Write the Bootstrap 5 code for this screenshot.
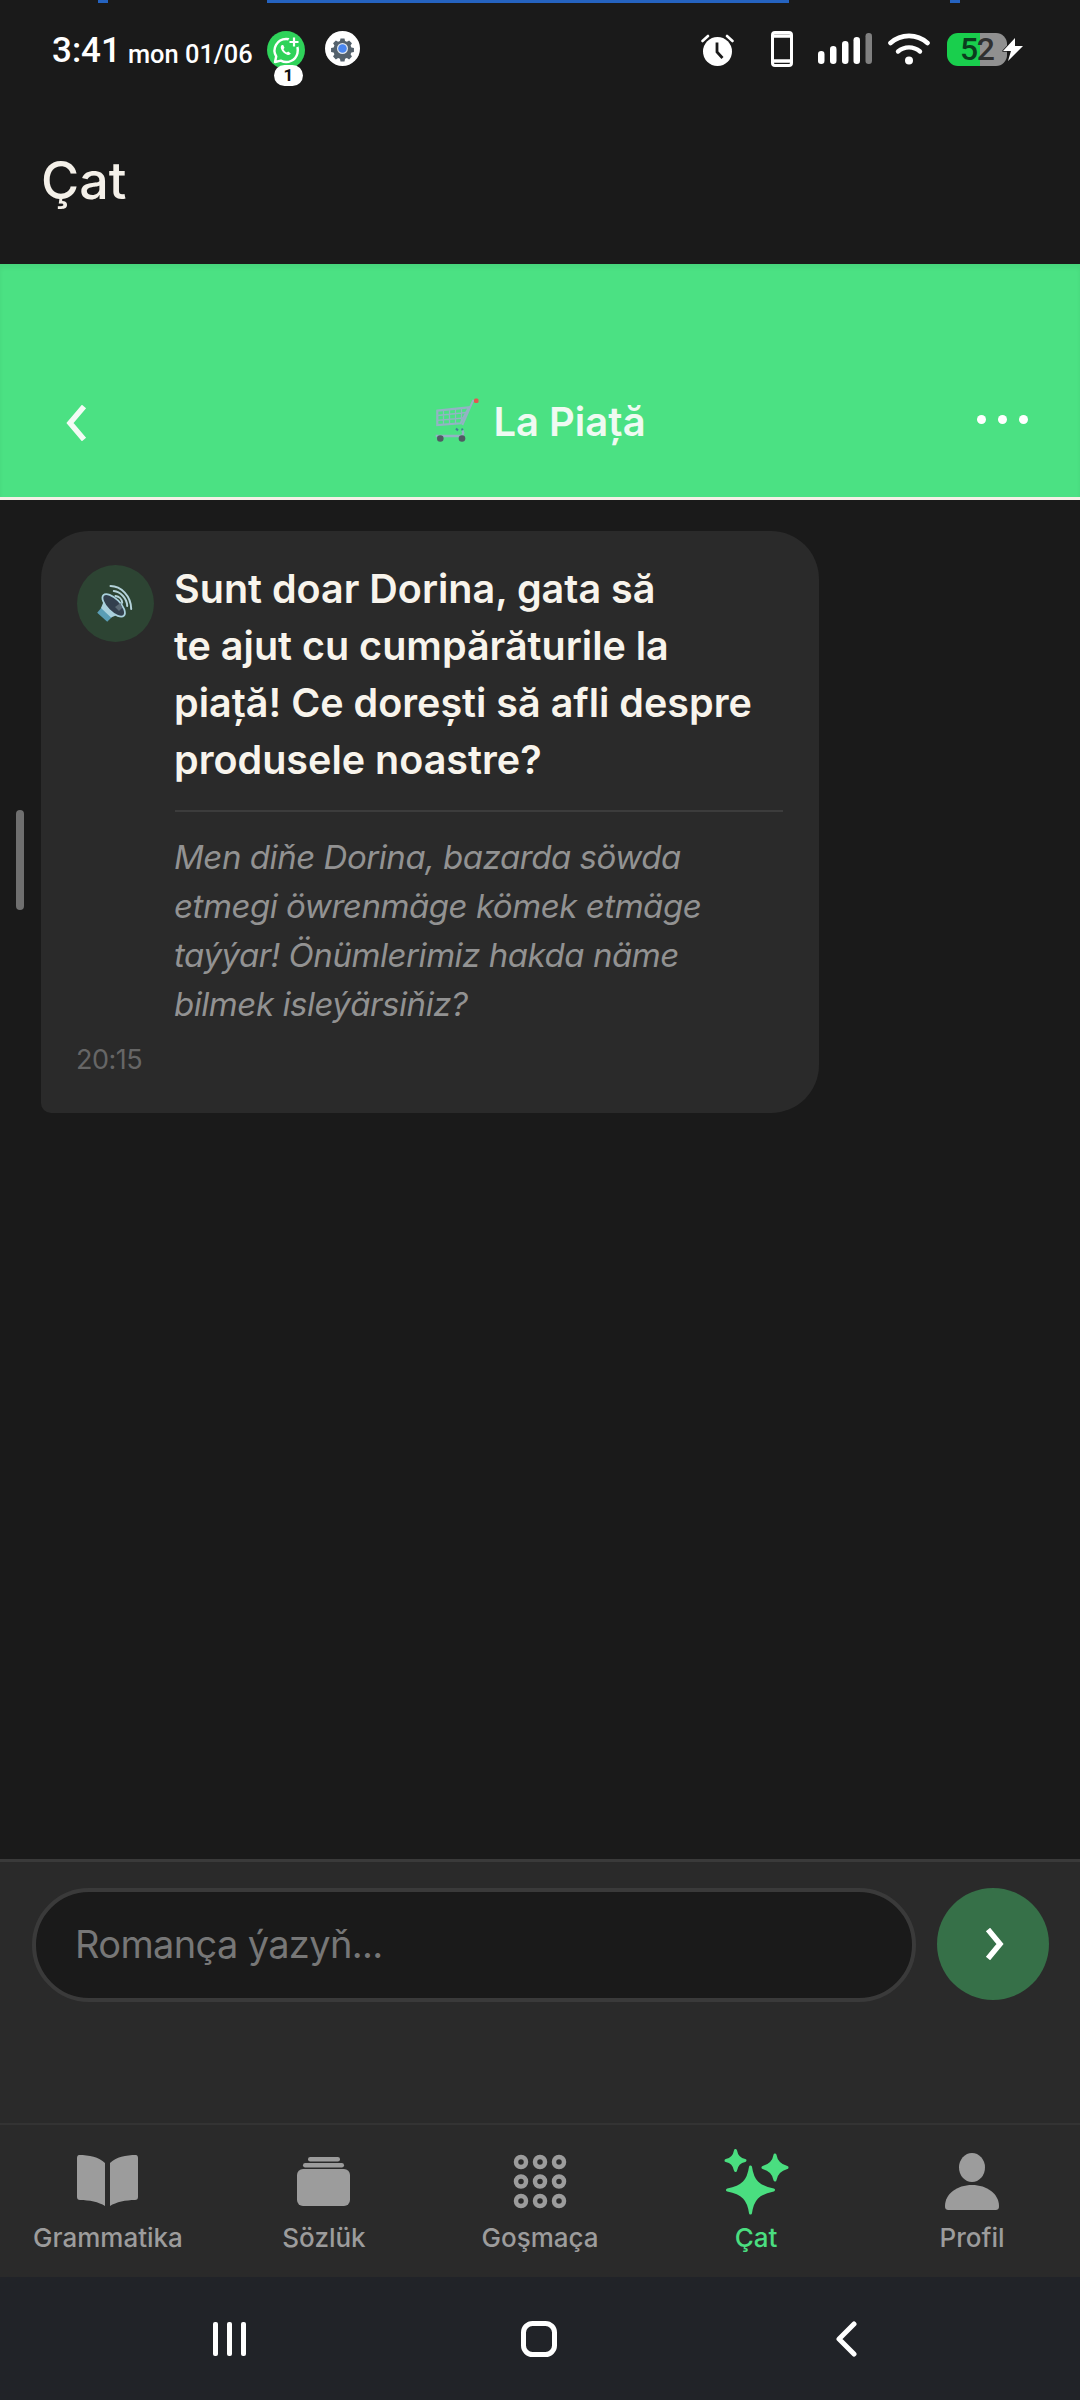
<!DOCTYPE html>
<html lang="tk">
<head>
    <meta charset="UTF-8">
    <meta name="viewport" content="width=device-width, initial-scale=1.0">
    <title>Çat</title>
    <link href="https://cdn.jsdelivr.net/npm/bootstrap@5.3.0/dist/css/bootstrap.min.css" rel="stylesheet">
    <style>
        body { background: #1a1a1a; font-family: Inter, "Liberation Sans", sans-serif; }
        svg { display: block; flex-shrink: 0; }
        .app-shell { width: 1080px; height: 2400px; overflow: hidden; }

        /* status bar */
        .status-area { height: 96px; }
        .blue-strip { height: 3px; padding-left: 98px; }
        .blue-strip span { height: 3px; background: #2563c0; }
        .strip-a { width: 10px; margin-right: 159px; }
        .strip-b { width: 522px; margin-right: 161px; }
        .strip-c { width: 10px; }
        .status-row { height: 93px; padding: 28px 56px 0 52px; color: #fff; font-family: Roboto, sans-serif; }
        .clock-big { font-size: 35px; font-weight: 500; line-height: 40px; width: 76px; }
        .clock-small { font-size: 25.4px; font-weight: 500; line-height: 40px; width: 139px; padding-top: 3px; }
        .notif-wrap { width: 38px; height: 56px; margin-right: 20px; }
        .notif-count { position: absolute; left: 7px; top: 34px; width: 29px; height: 21px; background: #fff; color: #111; border-radius: 11px; font-size: 17px; font-weight: 700; line-height: 21px; text-align: center; }
        .status-gear { margin-bottom: 20px; }
        .status-right { margin-bottom: 19px; }
        .alarm-icon { margin-right: 37px; }
        .phone-icon { margin-right: 25px; }
        .signal-icon { margin-right: 16px; }
        .wifi-icon { margin-right: 17px; }
        .battery-pill { width: 60px; height: 33px; border-radius: 11px; background: linear-gradient(90deg, #19cf4d 33px, #909090 33px); color: #303030; font-size: 32px; line-height: 33px; font-weight: 500; padding-left: 13px; letter-spacing: -1.5px; }
        .battery-pill b { font-weight: 500; color: #0b3d1e; }
        .bolt-icon { margin-left: -5px; }

        .page-heading { height: 168px; padding: 42px 0 0 41px; color: #f4f0e9; font-size: 52px; font-weight: 500; line-height: 86px; margin: 0; }

        /* green chat header */
        .chat-head { height: 236px; background: #4be183; border-bottom: 3px solid #f4f0e6; padding: 0 52px 56px 65px; box-shadow: inset 0 4px 4px rgba(0,0,0,.05); }
        .head-side { flex: 1 1 0; }
        .head-back { margin-top: 9px; }
        .chat-title { color: #effaf2; font-size: 40px; font-weight: 600; line-height: 44px; margin-right: 14px; }
        .chat-title span { margin-bottom: -3px; }
        .cart-icon { margin-right: 14px; margin-bottom: -1px; }
        .dot-row { column-gap: 12px; padding-bottom: 17px; }
        .dot-row span { width: 9px; height: 9px; background: #fff; border-radius: 50%; }

        /* messages */
        .chat-body { padding: 31px 41px; }
        .scroll-thumb { position: absolute; left: 16px; top: 310px; width: 8px; height: 100px; border-radius: 4px; background: #6f6f6f; }
        .msg-bubble { width: 778px; height: 582px; background: #2a2a2a; border-radius: 48px 48px 48px 10px; padding: 34px 36px 0; }
        .speak-btn { width: 77px; height: 77px; background: #2d4433; margin-right: 20px; }
        .msg-main { width: 609px; margin-top: -4px; }
        .msg-ro { color: #f8f4ec; font-size: 39.5px; font-weight: 600; line-height: 57px; margin: 0; }
        .msg-line { height: 2px; background: #3c3c3c; margin: 21px 0 21px 1px; }
        .msg-tk { color: #929292; font-size: 33px; font-style: italic; line-height: 49px; margin: 0; letter-spacing: -.45px; }
        .msg-time { color: #666; font-size: 27px; line-height: 32px; margin: 15px 0 0 -1px; letter-spacing: -.5px; }

        /* composer */
        .composer { height: 264px; background: #2a2a2a; border-top: 3px solid #3a3a3a; padding: 26px 31px 0 32px; }
        .composer .form-control { width: 884px; height: 114px; background: #1a1a1a; border: 4px solid #3a3a3a; color: #fff; font-size: 38px; letter-spacing: -.65px; padding: 0 39px 2px; }
        .composer .form-control::placeholder { color: #777; opacity: 1; }
        .send-btn { width: 112px; height: 112px; background: #367048; border: 0; margin-left: 21px; padding: 0 0 0 2px; }

        /* tabs */
        .tab-bar { height: 154px; background: #2a2a2a; border-top: 2px solid #333; padding-top: 21px; flex-wrap: nowrap; }
        .tab-bar .nav-link { padding: 0; color: #9c9c9c; font-size: 26px; font-weight: 500; line-height: 32px; }
        .tab-bar .nav-link.active { color: #4ade80; background: none; }
        .tab-bar svg { margin-bottom: 6px; }

        /* android bar */
        .system-bar { height: 123px; background: #212328; padding: 0 76px 0 74px; }
        .system-slot { flex: 1 1 0; }
        .system-back { margin-right: 6px; }
    </style>
</head>
<body>
<div class="app-shell d-flex flex-column">

    <div class="status-area flex-shrink-0">
        <div class="blue-strip d-flex"><span class="strip-a"></span><span class="strip-b"></span><span class="strip-c"></span></div>
        <div class="status-row d-flex align-items-start justify-content-between">
            <div class="d-flex align-items-start">
                <span class="clock-big">3:41</span>
                <span class="clock-small">mon 01/06</span>
                <div class="notif-wrap position-relative">
                    <svg width="38" height="38" viewBox="0 0 38 38">
                        <circle cx="19" cy="19" r="19" fill="#2fd35a"/>
                        <path d="M19 8a11.5 11.5 0 0 0-9.8 17.4L8 31l5.8-1.4A11.5 11.5 0 1 0 19 8z" fill="none" stroke="#fff" stroke-width="2.4" stroke-linejoin="round"/>
                        <path d="M15 14c-1 .6-1.6 2-1 3.8 1 2.8 3.4 5 6.2 6 1.7.5 3 0 3.6-1.2l-2.6-2-1.4 1c-1.5-.8-2.6-1.9-3.3-3.4l1-1.4-1.3-2.9z" fill="#fff"/>
                        <circle cx="27" cy="11" r="6" fill="#2fd35a"/>
                        <path d="M27 6.5v9M22.5 11h9" stroke="#fff" stroke-width="2.2"/>
                    </svg>
                    <span class="notif-count">1</span>
                </div>
                <svg class="status-gear" width="35" height="35" viewBox="0 0 35 35">
                    <circle cx="17.5" cy="17.5" r="17.5" fill="#fff"/>
                    <path d="M15 5h5l.7 3.200 2.300 1 2.800-1.700 3.500 3.500-1.700 2.800 1 2.300 3.200.7v5l-3.200.7-1 2.300 1.700 2.800-3.500 3.500-2.800-1.700-2.300 1-.7 3.200h-5l-.7-3.200-2.300-1-2.800 1.700-3.500-3.500 1.700-2.800-1-2.300-3.200-.7v-5l3.200-.7 1-2.300-1.700-2.800 3.500-3.500 2.800 1.700 2.300-1z" fill="#54616c" transform="translate(3.500 3.500) scale(.8)"/>
                    <circle cx="17.5" cy="17.5" r="5.5" fill="#dfe6ee"/>
                    <circle cx="17.5" cy="17.5" r="4.3" fill="#4a86f0"/>
                </svg>
            </div>
            <div class="status-right d-flex align-items-center">
                <svg class="alarm-icon" width="33" height="33" viewBox="0 0 33 33">
                    <circle cx="16.5" cy="18.5" r="14.5" fill="#fff"/>
                    <path d="M16 9.500v9.500l5.500 6" fill="none" stroke="#1a1a1a" stroke-width="2.8"/>
                    <path d="M1.500 8 7 3M31.500 8 26 3" stroke="#fff" stroke-width="2.6" stroke-linecap="round"/>
                </svg>
                <svg class="phone-icon" width="22" height="36" viewBox="0 0 22 36">
                    <rect x="1.5" y="1.5" width="19" height="33" rx="2.5" fill="none" stroke="#fff" stroke-width="3"/>
                    <path d="M1 5h20M1 30h20" stroke="#fff" stroke-width="3.5"/>
                </svg>
                <svg class="signal-icon" width="54" height="32" viewBox="0 0 54 32">
                    <rect x="0" y="18" width="6.5" height="13" rx="3.2" fill="#fff"/>
                    <rect x="12" y="13" width="6.5" height="18" rx="3.2" fill="#fff"/>
                    <rect x="24" y="8" width="6.5" height="23" rx="3.2" fill="#fff"/>
                    <rect x="35.5" y="4" width="6.5" height="27" rx="3.2" fill="#fff"/>
                    <rect x="47.5" y="0" width="6.5" height="31" rx="3.2" fill="#808080"/>
                </svg>
                <svg class="wifi-icon" width="42" height="32" viewBox="0 0 42 32">
                    <path d="M2.500 10C13 .5 29 .5 39.500 10" fill="none" stroke="#fff" stroke-width="4.6" stroke-linecap="round"/>
                    <path d="M10 18.500c6.500-5.500 15.500-5.500 22 0" fill="none" stroke="#fff" stroke-width="4.4" stroke-linecap="round"/>
                    <circle cx="21" cy="27.5" r="4" fill="#fff"/>
                </svg>
                <div class="battery-pill"><b>5</b>2</div>
                <svg class="bolt-icon" width="22" height="25" viewBox="0 0 22 25">
                    <path d="M13 1 1 14h8l-3 10L21 9h-8z" fill="#fff" stroke="#1a1a1a" stroke-width="1.5" stroke-linejoin="round" paint-order="stroke"/>
                </svg>
            </div>
        </div>
    </div>

    <h1 class="page-heading flex-shrink-0">Çat</h1>

    <div class="chat-head flex-shrink-0 d-flex align-items-end">
        <div class="head-side d-flex">
            <svg class="head-back" width="22" height="36" viewBox="0 0 22 36">
                <path d="M19 1.500 5 18l14 16.500" fill="none" stroke="#f3fbf5" stroke-width="5.500"/>
            </svg>
        </div>
        <div class="chat-title d-flex align-items-end">
            <svg class="cart-icon" width="46" height="44" viewBox="0 0 46 44">
                <path d="M29.300 27 40 2.700h2" fill="none" stroke="#93b3c4" stroke-width="2"/>
                <path d="M4.300 12.700 36 9.300 27.700 25.300 4.300 27z" fill="none" stroke="#93b3c4" stroke-width="2.200"/>
                <path d="M4.300 17.500 33.500 14.500M4.300 22.300 30.500 20M10.500 12v14.500M16.500 11.500v14.500M22.500 10.800v14.700M28.500 10v14.500" stroke="#93b3c4" stroke-width="1.300"/>
                <path d="M23 30.500l2 2M29 30.500l.5 2" stroke="#3f7f93" stroke-width="2"/>
                <path d="M2.700 38H27c3 0 4-2.500 2.500-5.500" fill="none" stroke="#93b3c4" stroke-width="2.400"/>
                <circle cx="7.300" cy="40.500" r="3.300" fill="#4f5b63"/>
                <circle cx="29" cy="40.500" r="3.300" fill="#4f5b63"/>
                <rect x="41" y="0.500" width="4.500" height="4.500" rx="1.500" fill="#e4574f"/>
            </svg>
            <span>La Piață</span>
        </div>
        <div class="head-side d-flex justify-content-end">
            <div class="dot-row d-flex">
                <span></span><span></span><span></span>
            </div>
        </div>
    </div>

    <div class="chat-body flex-grow-1 position-relative">
        <div class="scroll-thumb"></div>
        <div class="msg-bubble">
            <div class="d-flex">
                <div class="speak-btn rounded-circle d-flex align-items-center justify-content-center flex-shrink-0">
                    <svg width="42" height="42" viewBox="0 0 42 42">
                        <path d="M15.500 3C26 3 36 13 36.200 26M18.800 8C25 8.500 32 15 32.200 23M20.500 13C24 13.500 27 16 27.200 19.700" fill="none" stroke="#b5d3da" stroke-width="2" stroke-linecap="round"/>
                        <path d="M2.200 29.700 7 24 17 34 12.200 38.700z" fill="#5a9db5"/>
                        <path d="M6 25 10.500 14 27 30 16 34.500z" fill="#a9d0dc"/>
                        <ellipse cx="18.700" cy="22.300" rx="14.500" ry="6.500" transform="rotate(45 18.700 22.300)" fill="#33404e" stroke="#a9d0dc" stroke-width="1.800"/>
                        <path d="M20 24 25.500 20 27 25 24 28z" fill="#5b6a75"/>
                    </svg>
                </div>
                <div class="msg-main">
                    <p class="msg-ro">Sunt doar Dorina, gata să<br>te ajut cu cumpărăturile la<br>piață! Ce dorești să afli despre<br>produsele noastre?</p>
                    <div class="msg-line"></div>
                    <p class="msg-tk">Men diňe Dorina, bazarda söwda<br>etmegi öwrenmäge kömek etmäge<br>taýýar! Önümlerimiz hakda näme<br>bilmek isleýärsiňiz?</p>
                </div>
            </div>
            <div class="msg-time">20:15</div>
        </div>
    </div>

    <div class="composer flex-shrink-0 d-flex align-items-start">
        <input type="text" class="form-control rounded-pill" placeholder="Romança ýazyň...">
        <button type="button" class="send-btn btn rounded-circle d-flex align-items-center justify-content-center">
            <svg width="20" height="32" viewBox="0 0 20 32"><path d="M4 1.500l12 14.500-12 14.500" fill="none" stroke="#fff" stroke-width="5.500"/></svg>
        </button>
    </div>

    <ul class="tab-bar nav nav-justified flex-shrink-0">
        <li class="nav-item"><a class="nav-link d-flex flex-column align-items-center" href="#">
            <svg width="70" height="70" viewBox="0 0 70 70" fill="#9c9c9c">
                <path d="M6 9C16 9 26 11 32 17V60C26 56 16 54 7 54 5 54 4 53 4 51V12C4 10 5 9 6 9Z"/>
                <path d="M63 9C53 9 43 11 37 17V60C43 56 53 54 62 54 64 54 65 53 65 51V12C65 10 64 9 63 9Z"/>
            </svg>Grammatika</a></li>
        <li class="nav-item"><a class="nav-link d-flex flex-column align-items-center" href="#">
            <svg width="70" height="70" viewBox="0 0 70 70" fill="#9c9c9c">
                <rect x="19" y="11" width="32" height="4.5" rx="2.2"/>
                <rect x="14" y="17" width="41" height="4.5" rx="2.2"/>
                <rect x="8" y="23" width="53" height="37" rx="6"/>
            </svg>Sözlük</a></li>
        <li class="nav-item"><a class="nav-link d-flex flex-column align-items-center" href="#">
            <svg width="70" height="70" viewBox="0 0 70 70" fill="none" stroke="#9c9c9c" stroke-width="4.5">
                <circle cx="16" cy="16" r="5"/><circle cx="35" cy="16" r="5"/><circle cx="54" cy="16" r="5"/>
                <circle cx="16" cy="35.5" r="5"/><circle cx="35" cy="35.5" r="5"/><circle cx="54" cy="35.5" r="5"/>
                <circle cx="16" cy="55" r="5"/><circle cx="35" cy="55" r="5"/><circle cx="54" cy="55" r="5"/>
            </svg>Goşmaça</a></li>
        <li class="nav-item"><a class="nav-link active d-flex flex-column align-items-center" href="#">
            <svg width="70" height="70" viewBox="0 0 70 70" fill="#4ade80" stroke="#4ade80" stroke-width="3" stroke-linejoin="round">
                <path d="M29.500 21C31.500 35 37 41 52.500 44 37 47 31.500 53 29.500 67 27.500 53 22 47 6.500 44 22 41 27.500 35 29.500 21Z"/>
                <path d="M14.500 4.500C15.500 10.500 18.500 13.500 24 14.500 18.500 15.500 15.500 18.500 14.500 24.500 13.500 18.500 10.500 15.500 5 14.500 10.500 13.500 13.500 10.500 14.500 4.500Z"/>
                <path d="M54 9C55 15.500 58.500 19.500 66 21.500 58.500 23.500 55 27.500 54 34 53 27.500 49.500 23.500 42 21.500 49.500 19.500 53 15.500 54 9Z"/>
            </svg>Çat</a></li>
        <li class="nav-item"><a class="nav-link d-flex flex-column align-items-center" href="#">
            <svg width="70" height="70" viewBox="0 0 70 70" fill="#9c9c9c">
                <ellipse cx="35" cy="21.5" rx="13" ry="14.5"/>
                <path d="M8 60C8 48 20 39 35 39S62 48 62 60C62 63 61 64 58 64H12C9 64 8 63 8 60Z"/>
            </svg>Profil</a></li>
    </ul>

    <div class="system-bar flex-shrink-0 d-flex align-items-center">
        <div class="system-slot d-flex justify-content-center">
            <svg width="36" height="36" viewBox="0 0 36 36" fill="#fff">
                <rect x="2" y="1" width="5" height="34" rx="2"/><rect x="16" y="1" width="5" height="34" rx="2"/><rect x="30" y="1" width="5" height="34" rx="2"/>
            </svg>
        </div>
        <div class="system-slot d-flex justify-content-center">
            <svg width="36" height="36" viewBox="0 0 36 36"><rect x="2.5" y="2.5" width="31" height="31" rx="9" fill="none" stroke="#fff" stroke-width="5"/></svg>
        </div>
        <div class="system-slot d-flex justify-content-center">
            <svg class="system-back" width="22" height="36" viewBox="0 0 22 36"><path d="M19 3 4 18l15 15" fill="none" stroke="#fff" stroke-width="5" stroke-linecap="round" stroke-linejoin="round"/></svg>
        </div>
    </div>
</div>
<script src="https://cdn.jsdelivr.net/npm/bootstrap@5.3.0/dist/js/bootstrap.bundle.min.js"></script>
</body>
</html>
